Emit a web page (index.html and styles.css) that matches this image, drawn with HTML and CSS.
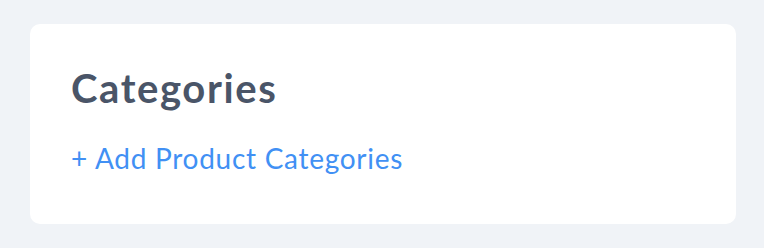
FILE: index.html
```html
<!DOCTYPE html>
<html lang="en">
<head>
<meta charset="utf-8">
<title>Categories</title>
<link rel="stylesheet" href="styles.css">
</head>
<body>
<main class="page">
  <section class="card">
    <h2 class="card-title">Categories</h2>
    <a class="add-link" href="#">+ Add Product Categories</a>
  </section>
</main>
</body>
</html>
```
FILE: styles.css
```css
html, body {
  margin: 0;
  padding: 0;
  background: #f0f3f7;
}
body {
  font-family: "Lato", "Noto Sans", sans-serif;
}
.page {
  padding: 24px 28px 24px 30px;
}
.card {
  background: #ffffff;
  border-radius: 10px;
  height: 200px;
  box-sizing: border-box;
  padding: 40px 40px 0 41px;
  display: flex;
  flex-direction: column;
  align-items: flex-start;
}
.card-title {
  margin: 0;
  font-size: 40px;
  line-height: 48px;
  font-weight: 700;
  letter-spacing: 1.6px;
  color: #4a5568;
}
.add-link {
  margin-top: 29px;
  font-size: 28px;
  line-height: 34px;
  letter-spacing: 0.72px;
  color: #4190f4;
  text-decoration: none;
}
```
